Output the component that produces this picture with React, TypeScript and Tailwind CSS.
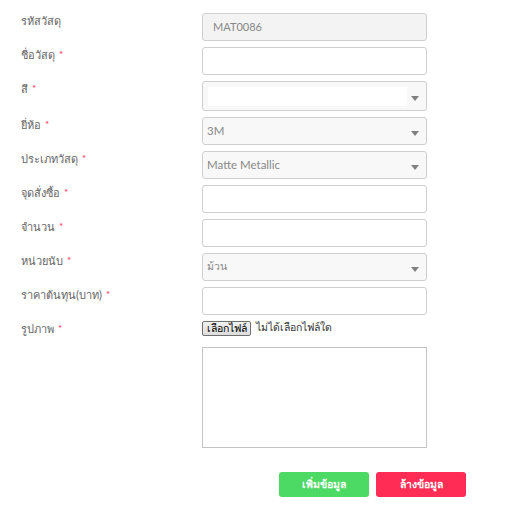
import React from "react";

const Star = () => <span className="text-[#ff2d55] ml-[4px] text-[10px] align-top">*</span>;

const Arrow = () => (
  <svg width="8" height="5" viewBox="0 0 8 5" className="absolute right-[7px] top-1/2 -translate-y-[0px]">
    <path d="M0 0 L8 0 L4 5 Z" fill="#808080" />
  </svg>
);

function Label({ text, req = true }: { text: string; req?: boolean }) {
  return (
    <div className="text-[11px] leading-[15px] text-[#666]">
      {text}
      {req && <Star />}
    </div>
  );
}

function Input({ value, disabled }: { value?: string; disabled?: boolean }) {
  return (
    <div
      className={`h-[28px] w-[225px] rounded-[3px] border border-[#cfcfcf] flex items-center px-[10px] text-[11px] text-[#888] ${
        disabled ? "bg-[#f3f3f3]" : "bg-white"
      }`}
    >
      {value}
    </div>
  );
}

function Select({ value, tall, thai }: { value?: string; tall?: boolean; thai?: boolean }) {
  return (
    <div
      className={`relative ${tall ? "h-[30px]" : "h-[28px]"} w-[225px] rounded-[3px] border border-[#cfcfcf] bg-[#f8f8f8] flex items-center px-[4px] ${thai ? "text-[10.5px]" : "text-[11.5px]"} text-[#888]`}
    >
      {tall ? <div className="h-[19px] w-[199px] bg-white ml-[1px]" /> : value}
      <Arrow />
    </div>
  );
}

export default function App() {
  const rows: [string, React.ReactNode, boolean][] = [
    ["รหัสวัสดุ", <Input value="MAT0086" disabled />, false],
    ["ชื่อวัสดุ", <Input />, true],
    ["สี", <Select tall />, true],
    ["ยี่ห้อ", <Select value="3M" />, true],
    ["ประเภทวัสดุ", <Select value="Matte Metallic" />, true],
    ["จุดสั่งซื้อ", <Input />, true],
    ["จำนวน", <Input />, true],
    ["หน่วยนับ", <Select value="ม้วน" thai />, true],
    ["ราคาต้นทุน(บาท)", <Input />, true],
  ];
  return (
    <div
      className="w-[505px] h-[519px] bg-white pl-[21px] pt-[13px]"
      style={{ fontFamily: "Lato, 'Noto Sans', sans-serif" }}
    >
      <div className="flex flex-col gap-[6px]">
        {rows.map(([l, c, r], i) => (
          <div key={i} className="flex items-start">
            <div className="w-[181px]">
              <Label text={l} req={r} />
            </div>
            {c}
          </div>
        ))}
        <div className="flex items-start">
          <div className="w-[181px]">
            <Label text="รูปภาพ" />
          </div>
          <div className="flex flex-col">
            <div className="flex items-center h-[14px]">
              <div className="h-[15px] w-[49px] justify-center border border-[#707070] rounded-[2px] bg-gradient-to-b from-[#f2f2f2] to-[#dddddd] text-[10.5px] leading-[13px] text-black flex items-center">
                เลือกไฟล์
              </div>
              <span className="ml-[5px] text-[10.5px] text-[#333]">ไม่ได้เลือกไฟล์ใด</span>
            </div>
            <div className="mt-[12px] h-[101px] w-[225px] border border-[#c4c4c4] bg-white" />
          </div>
        </div>
      </div>
      <div className="flex justify-end gap-[7px] mt-[24px] pr-[39px]">
        <button className="w-[90px] h-[25px] rounded-[3px] bg-[#4cd964] text-white text-[10.5px] font-bold">
          เพิ่มข้อมูล
        </button>
        <button className="w-[90px] h-[25px] rounded-[3px] bg-[#ff2d55] text-white text-[10.5px] font-bold">
          ล้างข้อมูล
        </button>
      </div>
    </div>
  );
}
